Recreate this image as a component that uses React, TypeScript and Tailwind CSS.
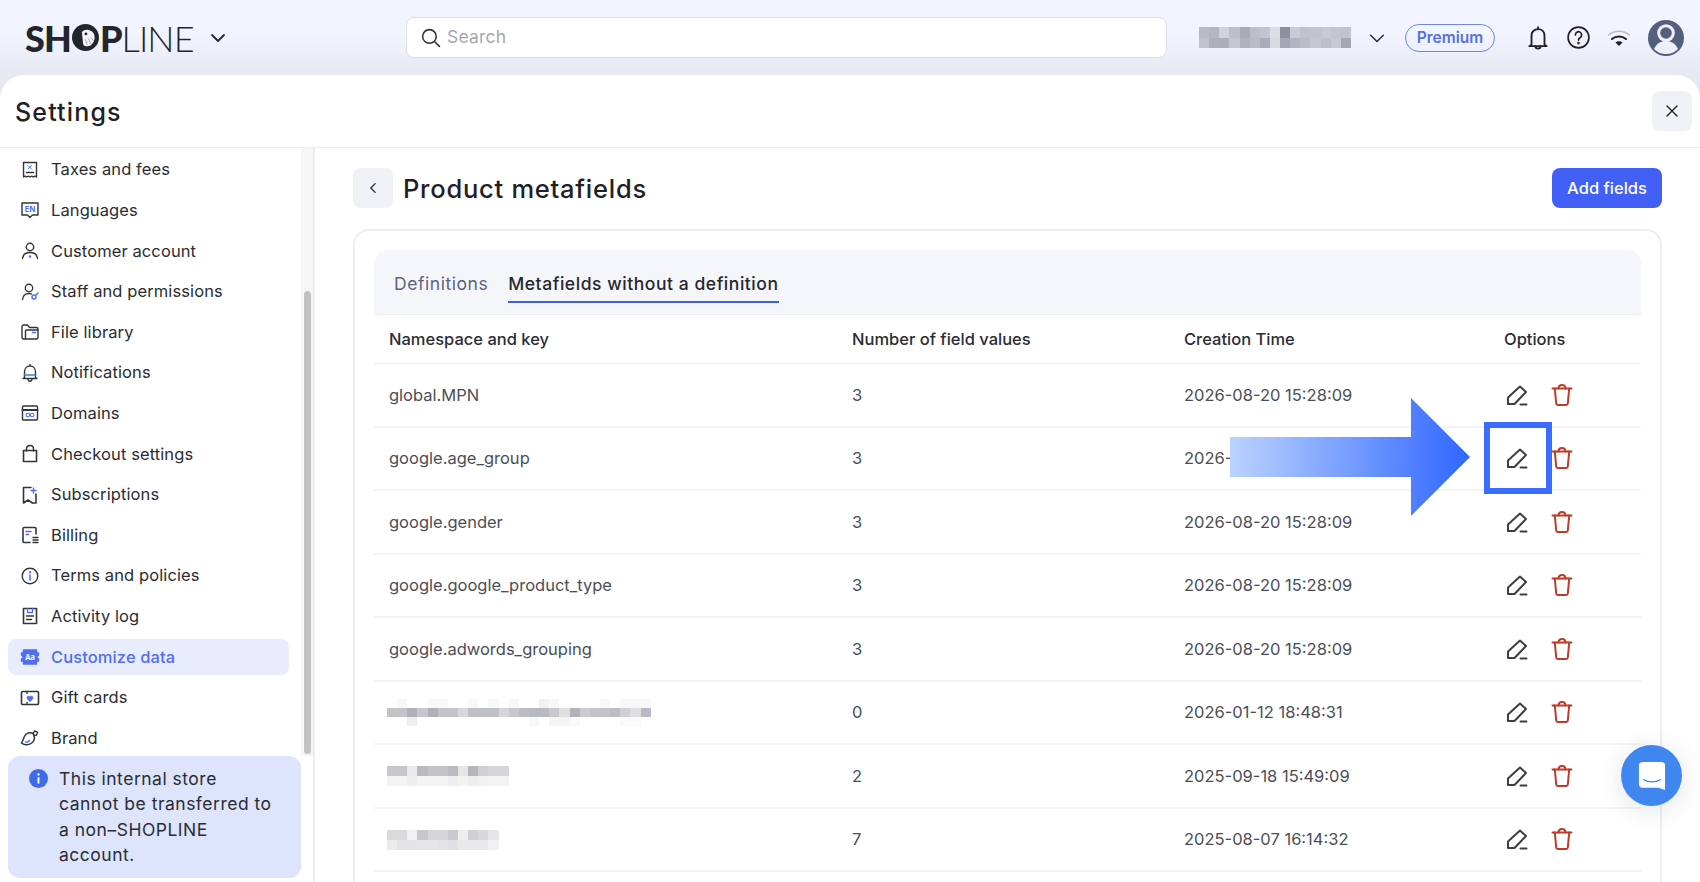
import React from "react";

const BLUE = "#4f6ef0";
const INK = "#33353c";

function Ic({ children, className = "w-5 h-5" }: { children: React.ReactNode; className?: string }) {
  return (
    <svg viewBox="0 0 20 20" fill="none" stroke={INK} strokeWidth={1.4} strokeLinecap="round" strokeLinejoin="round" className={`${className} shrink-0`}>
      {children}
    </svg>
  );
}

const icons: Record<string, React.ReactNode> = {
  tax: (<><path d="M3.5 2.5h13v14.5l-1.6-.9-1.6.9-1.6-.9-1.700.9-1.600-.9-1.600.9-1.600-.9-1.600.9z" /><path d="M8 5.500l3.500 3.500M11.500 5.500L8 9" stroke={BLUE} strokeWidth={1} /><path d="M6.500 12.500h7" /></>),
  lang: (<><path d="M2 3h16v12h-5.500L10 17.500 7.500 15H2z" /><text x="10" y="12" textAnchor="middle" fontSize="7.500" fontWeight="700" fill={BLUE} stroke="none" fontFamily="Inter">EN</text></>),
  user: (<><circle cx="10" cy="6" r="3.700" /><path d="M2.500 17.500c.5-4 3.500-6 7.500-6s7 2 7.500 6" /><circle cx="10" cy="15.500" r=".6" fill={BLUE} stroke={BLUE} /></>),
  staff: (<><circle cx="9" cy="6" r="3.700" /><path d="M2.500 17.500c.5-4 3-6 6.500-6 1 0 1.800.1 2.500.4" /><circle cx="14" cy="15" r="2" stroke={BLUE} /><path d="M16 13l2-2" stroke={BLUE} /></>),
  file: (<><path d="M2 15.500V4.500c0-.8.6-1.500 1.500-1.500h4l2 2.500h7c.8 0 1.500.7 1.500 1.500v8.500c0 .8-.7 1.500-1.500 1.500h-13c-.9 0-1.500-.7-1.500-1.500z" /><path d="M5.500 16.500V9c0-.6.4-1 1-1H18" /><path d="M12.500 10.500h3" stroke={BLUE} /></>),
  bell: (<><path d="M10 1.500v1.500M4.500 14.500V9c0-3.400 2.300-6 5.500-6s5.500 2.600 5.500 6v5.500l1.500 1H3z" /><path d="M4.500 12h11" stroke={BLUE} strokeWidth={1.600} /><path d="M8 16.500c.3 1.200 1 1.800 2 1.800s1.700-.6 2-1.800" /></>),
  domain: (<><rect x="2.500" y="3" width="15" height="14" rx="1" /><path d="M2.500 7h15" strokeWidth={2} /><circle cx="7.800" cy="12" r="1.800" stroke={BLUE} strokeWidth={1.100} /><circle cx="12.200" cy="12" r="1.800" stroke={BLUE} strokeWidth={1.100} /></>),
  bag: (<><path d="M3.500 6.500h13v11h-13z" strokeWidth={1.600} /><path d="M6.500 7V5c0-2 1.500-3.500 3.500-3.500S13.500 3 13.500 5v2" /></>),
  sub: (<><path d="M11 2.500H3.500v15.500l4.500-3 4.500 3 3.500 0V9" strokeWidth={1.600} /><path d="M13.500 3v5M11 5.500h5" stroke={BLUE} /></>),
  bill: (<><path d="M16 9V3.500c0-.6-.4-1-1-1H4c-.6 0-1 .4-1 1V16.500c0 .6.4 1 1 1h6" strokeWidth={1.600} /><path d="M6 6.500h5M6 9.500h2.500" stroke={BLUE} /><path d="M13 12.500h5M13 15h5M13 17.500h5" /></>),
  info: (<><circle cx="10" cy="10" r="7.800" /><path d="M10 9v5" stroke={BLUE} strokeWidth={1.500} /><circle cx="10" cy="6.300" r=".5" stroke={BLUE} /></>),
  log: (<><path d="M3.500 2.500h13v15h-13z" strokeWidth={1.600} /><path d="M7.500 2.500v4h5v-4" stroke={BLUE} /><path d="M6.500 10h7M6.500 13.500h5" /></>),
  custom: (<><path d="M3.500 3h13v3h2v2l-2 2 2 2v2h-2v3h-13v-3h-2v-2l2-2-2-2V6h2z" fill={BLUE} stroke={BLUE} /><text x="10" y="13" textAnchor="middle" fontSize="7.500" fontWeight="700" fill="#fff" stroke="none" fontFamily="Inter">Aa</text></>),
  gift: (<><rect x="1.500" y="3.500" width="17" height="13" rx="1" strokeWidth={1.600} /><path d="M7 3.500v2M7 14.500v2" /><path d="M10 13.500c-2-1.300-3-2.400-3-3.700 0-1 .8-1.700 1.600-1.700.6 0 1.100.3 1.400.8.300-.5.800-.8 1.400-.8.800 0 1.600.7 1.600 1.700 0 1.300-1 2.400-3 3.700z" fill={BLUE} stroke={BLUE} strokeWidth={.6} /></>),
  brand: (<><path d="M13 5.500c-3-1.800-7-.5-8.500 2.800C3.500 10.500 3 12.500 1.500 15c2 2 6.500 2.500 9.500.5 3-2 4-5 3-8z" strokeWidth={1.500} /><path d="M13.200 5.300l1.500-2.500 3 1.500-1.300 3-2.400.2z" /><path d="M5.500 14c1.500.3 3-.2 4-1.500" stroke={BLUE} /></>),
};

const nav: [string, string][] = [
  ["tax", "Taxes and fees"],
  ["lang", "Languages"],
  ["user", "Customer account"],
  ["staff", "Staff and permissions"],
  ["file", "File library"],
  ["bell", "Notifications"],
  ["domain", "Domains"],
  ["bag", "Checkout settings"],
  ["sub", "Subscriptions"],
  ["bill", "Billing"],
  ["info", "Terms and policies"],
  ["log", "Activity log"],
  ["custom", "Customize data"],
  ["gift", "Gift cards"],
  ["brand", "Brand"],
];

function Edit() {
  return (
    <svg viewBox="0 0 24 24" fill="none" stroke="#3d3f47" strokeWidth={2} strokeLinecap="round" strokeLinejoin="round" className="w-[24px] h-[24px]">
      <path d="M3 21v-6.500L15 3.500 21 9 9.500 21z" />
      <path d="M15.500 21.500H21.500" />
    </svg>
  );
}

function Trash() {
  return (
    <svg viewBox="0 0 24 24" fill="none" stroke="#bd3b28" strokeWidth={2} strokeLinecap="round" strokeLinejoin="round" className="w-[24px] h-[24px]">
      <path d="M2.500 5.500h19" />
      <path d="M8.500 5.500c0-2 1.400-3.500 3.500-3.500s3.500 1.500 3.500 3.500" />
      <path d="M4.800 5.500l1.400 15c.1.900.7 1.500 1.600 1.500h8.400c.9 0 1.500-.6 1.600-1.500l1.400-15" />
    </svg>
  );
}

function Blocks({ rows, w, h }: { rows: string[][]; w: number; h: number }) {
  return (
    <div className="flex flex-col blur-[0.6px]">
      {rows.map((r, i) => (
        <div key={i} className="flex">
          {r.map((c, j) => (
            <div key={j} style={{ width: w, height: h, background: c }} />
          ))}
        </div>
      ))}
    </div>
  );
}

const nameRows = [
  ["#b9bbc8","#b4b6c3","#d0d2de","#bcbeca","#a9abb8","#bdbfcb","#c2c4d0","#dcdde6","#8e909e","#c9cbd6","#bfc1cd","#c1c3cf","#c7c9d4","#c2c4d0","#c0c2ce"],
  ["#c0c2ce","#adafbc","#acaeba","#c5c7d2","#b0b2bf","#b9bbc7","#a9abb8","#d8dae3","#a5a7b5","#b2b4c1","#bbbdc9","#c4c6d1","#bcbeca","#c6c8d3","#a4a6b3"],
];
const r6 = [
  ["#fff","#f8f8f9","#fff","#fff","#f8f8f9","#f8f8f9","#fff","#fff","#f8f8f9","#fff","#f8f8f9","#fff","#f8f8f9","#fff","#fff","#f1f1f3","#f8f8f9","#fff","#fff","#fff","#fff","#f8f8f9","#fff","#f8f8f9","#f8f8f9","#f8f8f9"],
  ["#c3c3c9","#c3c3c9","#b0b0b8","#c6c6cc","#b0b0b8","#c3c3c9","#c3c3c9","#d8d8dc","#c0c0c7","#c0c0c7","#c0c0c7","#d6d6da","#c6c6cc","#bcbcc3","#b9b9c1","#b9b9c1","#c8c8ce","#e0e0e3","#b2b2ba","#cbcbd0","#c3c3c9","#c3c3c9","#bcbcc3","#cfcfd4","#dedee1","#b9b9c1"],
  ["#fff","#fff","#eeeeef","#fff","#fff","#fff","#fff","#fff","#fff","#fff","#fff","#fff","#fff","#fff","#f8f8f9","#fff","#f5f5f6","#f5f5f6","#fafafb","#fff","#fff","#fff","#fff","#fafafb","#fafafb","#fff"],
];
const r7 = [
  ["#c6c6cc","#c6c6cc","#ebebed","#b9b9c1","#c3c3c9","#c3c3c9","#b9b9c1","#e6e6e9","#b5b5bd","#cfcfd4","#d6d6da","#d6d6da"],
  ["#f3f3f4","#f3f3f4","#eeeeef","#f3f3f4","#f3f3f4","#f3f3f4","#eeeeef","#f3f3f4","#eeeeef","#f1f1f3","#f3f3f4","#f3f3f4"],
];
const r8 = [
  ["#dadade","#dadade","#f0f0f1","#c6c6cc","#d6d6da","#d6d6da","#c9c9cf","#eeeeef","#cfcfd4","#d8d8dc","#e6e6e9"],
  ["#ebebed","#e4e4e7","#e4e4e7","#e6e6e9","#e6e6e9","#e4e4e7","#e0e0e3","#e8e8ea","#e8e8ea","#e8e8ea","#f0f0f1"],
];

type Row = { key: React.ReactNode; n: string; t: string };
const rows: Row[] = [
  { key: "global.MPN", n: "3", t: "2026-08-20 15:28:09" },
  { key: "google.age_group", n: "3", t: "2026-08-20 15:28:09" },
  { key: "google.gender", n: "3", t: "2026-08-20 15:28:09" },
  { key: "google.google_product_type", n: "3", t: "2026-08-20 15:28:09" },
  { key: "google.adwords_grouping", n: "3", t: "2026-08-20 15:28:09" },
  { key: <div className="-ml-[2px]"><Blocks rows={r6} w={10.150} h={9} /></div>, n: "0", t: "2026-01-12 18:48:31" },
  { key: <div className="-ml-[2px]"><Blocks rows={r7} w={10.150} h={10} /></div>, n: "2", t: "2025-09-18 15:49:09" },
  { key: <div className="-ml-[2px]"><Blocks rows={r8} w={10.150} h={10} /></div>, n: "7", t: "2025-08-07 16:14:32" },
];

export default function App() {
  return (
    <div className="relative w-[1700px] h-[882px] overflow-hidden flex flex-col bg-[#e6e8f2] font-['Inter',sans-serif] text-[#26282e]">
      {/* top bar */}
      <header className="h-[75px] shrink-0 flex items-center bg-gradient-to-b from-[#f2f5ff] from-45% to-[#e6e8f2]">
        <div className="w-[406px] shrink-0 pl-[25px] flex items-center">
          <div className="flex items-center h-[40px] text-[#23262d] text-[36px] leading-[40px] tracking-[-0.9px] font-['Lato',sans-serif]">
            <span className="font-black">SH</span>
            <svg viewBox="0 0 30 30" className="w-[27px] h-[27px] mx-[1px]">
              <circle cx="15" cy="15" r="15" fill="#23262d" />
              <path d="M11 9c3-4 10-3.500 13 1.500 2.500 5 .5 10-3 13-3 2-6.500 1.500-8.500-.5z" fill="#f4f5fa" />
              <circle cx="15.500" cy="11" r="1.600" fill="#23262d" />
              <path d="M15 17l2 6M18 16l3 6M21 15l3 4" stroke="#8e919c" strokeWidth="0.9" fill="none" />
            </svg>
            <span className="font-black">P</span>
            <span className="font-light">LINE</span>
          </div>
          <svg viewBox="0 0 20 20" fill="none" stroke="#26282e" strokeWidth={1.800} strokeLinecap="round" strokeLinejoin="round" className="w-[20px] h-[20px] ml-[14px]">
            <path d="M4 7l6 6 6-6" />
          </svg>
        </div>
        <div className="w-[761px] h-[41px] shrink-0 rounded-[8px] border border-[#dcdfe8] bg-white flex items-center pl-[13px] gap-[6px]">
          <svg viewBox="0 0 20 20" fill="none" stroke="#33353c" strokeWidth={1.500} strokeLinecap="round" className="w-[21px] h-[21px]">
            <circle cx="9" cy="9" r="6.500" />
            <path d="M14 14l4.500 4.500" />
          </svg>
          <span className="text-[17.500px] tracking-[0.2px] text-[#a5a8b2]">Search</span>
        </div>
        <div className="ml-[32px] w-[152px] shrink-0">
          <Blocks rows={nameRows} w={10.130} h={10.500} />
        </div>
        <svg viewBox="0 0 20 20" fill="none" stroke="#26282e" strokeWidth={1.600} strokeLinecap="round" strokeLinejoin="round" className="w-[18px] h-[18px] ml-[17px]">
          <path d="M3 7l7 7 7-7" />
        </svg>
        <div className="ml-[19px] w-[90px] h-[28px] rounded-full border border-[#6f87d9] flex items-center justify-center text-[15.500px] font-semibold text-[#5571df]">
          Premium
        </div>
        <svg viewBox="0 0 24 24" fill="none" stroke="#1f2126" strokeWidth={1.700} strokeLinecap="round" strokeLinejoin="round" className="w-[26px] h-[26px] ml-[30px]">
          <path d="M12 2v1.800M6 18V10c0-3.600 2.500-6.200 6-6.200s6 2.600 6 6.200v8l2 1.500H4z" />
          <path d="M9.500 19.500c.2 1.500 1.200 2.300 2.500 2.300s2.300-.8 2.500-2.300" />
        </svg>
        <svg viewBox="0 0 24 24" fill="none" stroke="#1f2126" strokeWidth={1.600} strokeLinecap="round" strokeLinejoin="round" className="w-[25px] h-[25px] ml-[15px]">
          <circle cx="12" cy="12" r="10" />
          <path d="M9 9.500a3 3 0 1 1 4.600 2.500c-1 .7-1.600 1.200-1.600 2.500" />
          <circle cx="12" cy="17.300" r=".5" />
        </svg>
        <svg viewBox="0 0 24 24" fill="none" strokeLinecap="round" className="w-[24px] h-[24px] ml-[16px]">
          <path d="M1.500 9C7.500 4 16.500 4 22.500 9" stroke="#b9bcc6" strokeWidth={1.600} />
          <path d="M5 13c4-3.300 10-3.300 14 0" stroke="#1f2126" strokeWidth={2} />
          <path d="M8.500 16.500c2-1.700 5-1.700 7 0L12 20z" fill="#1f2126" />
        </svg>
        <svg viewBox="0 0 36 36" className="w-[36px] h-[36px] ml-[17px]">
          <circle cx="18" cy="18" r="18" fill="#555f7c" />
          <circle cx="18" cy="13" r="8.800" fill="#eef0f9" />
          <circle cx="18" cy="13" r="5.800" fill="#555f7c" />
          <path d="M6 29c3-6 7-8 12-8s9 2 12 8c-3 3-7 5-12 5s-9-2-12-5z" fill="#eef0f9" />
        </svg>
      </header>

      {/* panel */}
      <div className="flex-1 min-h-0 bg-white rounded-t-[24px] flex flex-col">
        <div className="h-[73px] shrink-0 border-b border-[#eceef1] flex items-center justify-between pl-[15px] pr-[8px]">
          <h1 className="pt-[3px] text-[25px] font-medium tracking-[1.150px] text-[#1f2126]">Settings</h1>
          <button className="w-[40px] h-[40px] rounded-[8px] bg-[#f0f1f6] flex items-center justify-center">
            <svg viewBox="0 0 16 16" fill="none" stroke="#1f2126" strokeWidth={1.400} strokeLinecap="round" className="w-[16px] h-[16px]">
              <path d="M3 3l10 10M13 3L3 13" />
            </svg>
          </button>
        </div>

        <div className="flex-1 min-h-0 flex">
          {/* sidebar */}
          <aside className="w-[315px] shrink-0 border-r-2 border-[#ebedf0] flex flex-col">
            <div className="h-[608px] shrink-0 flex overflow-hidden">
              <nav className="w-[301px] shrink-0 pt-[1.500px] pl-[8px]">
                {nav.map(([ic, label]) => {
                  const active = label === "Customize data";
                  return (
                    <div key={label} className="h-[40.600px] py-[2.500px]">
                      <div className={`h-full w-[281px] rounded-[8px] flex items-center pl-[12px] gap-[11px] text-[16.500px] tracking-[0.1px] ${active ? "bg-[#e9ecfd] text-[#4f6ef0] font-medium" : "text-[#2b2d33]"}`}>
                        <Ic>{icons[ic]}</Ic>
                        <span>{label}</span>
                      </div>
                    </div>
                  );
                })}
              </nav>
              <div className="w-[12px] bg-[#f6f6f7] pt-[143px] pl-[3px]">
                <div className="w-[7px] h-[463px] rounded-full bg-[#c2c2c4]" />
              </div>
            </div>
            <div className="ml-[8px] w-[293px] h-[122px] rounded-[12px] bg-[#dde4fb] pt-[10px] pl-[21px] flex gap-[11px] text-[17.500px] leading-[25.400px] tracking-[0.5px] text-[#2a2d36]">
              <svg viewBox="0 0 20 20" className="w-[19px] h-[19px] mt-[3px] shrink-0">
                <circle cx="10" cy="10" r="10" fill="#3f6ae8" />
                <rect x="9" y="8.500" width="2" height="7" rx="1" fill="#fff" />
                <circle cx="10" cy="5.800" r="1.200" fill="#fff" />
              </svg>
              <p className="whitespace-nowrap">This internal store<br />cannot be transferred to<br />a non–SHOPLINE<br />account.</p>
            </div>
          </aside>

          {/* main */}
          <main className="flex-1 min-w-0 pt-[20px] pl-[38px] pr-[38px] overflow-hidden">
            <div className="h-[40px] flex items-center">
              <button className="w-[40px] h-[40px] rounded-[8px] bg-[#f0f1f6] flex items-center justify-center">
                <svg viewBox="0 0 16 16" fill="none" stroke="#26282e" strokeWidth={1.500} strokeLinecap="round" strokeLinejoin="round" className="w-[14px] h-[14px]">
                  <path d="M10.500 3L5.500 8l5 5" />
                </svg>
              </button>
              <h2 className="ml-[10px] pt-[2px] text-[25.500px] font-medium tracking-[0.75px] text-[#1f2126]">Product metafields</h2>
              <button className="ml-auto w-[110px] h-[40px] rounded-[8px] bg-[#4260f6] text-white text-[16.500px] font-medium">Add fields</button>
            </div>

            <div className="mt-[21px] h-[700px] rounded-[16px] border-2 border-[#eceef1] pt-[19px] px-[19px]">
              <div className="h-[65px] rounded-t-[14px] bg-[#f5f6fa] border-b border-[#eceef1] flex items-end pl-[20px] gap-[20px] text-[17.500px] tracking-[0.55px]">
                <div className="mb-[11px] h-[41px] pt-[9px] leading-[26px] text-[#5b6380]">Definitions</div>
                <div className="mb-[11px] h-[41px] pt-[9px] leading-[26px] font-medium text-[#26282e] border-b-[2.500px] border-[#3f5fe0]">Metafields without a definition</div>
              </div>
              <div className="h-[49px] pt-[1px] flex items-center border-b border-[#eef0f2] text-[16.500px] font-medium text-[#2b2d33]">
                <div className="w-[478px] pl-[15px]">Namespace and key</div>
                <div className="w-[332px]">Number of field values</div>
                <div className="w-[320px]">Creation Time</div>
                <div>Options</div>
              </div>
              {rows.map((r, i) => (
                <div key={i} className="h-[63.500px] flex items-center border-b-2 border-[#f3f4f6] text-[16.500px] text-[#4b4e56]">
                  <div className="w-[478px] pl-[15px] pt-[1px]">{r.key}</div>
                  <div className="w-[332px] pt-[1px]">{r.n}</div>
                  <div className="w-[320px] pt-[1px]">{r.t}</div>
                  <div className="flex gap-[21px] pl-[1px]">
                    <Edit />
                    <Trash />
                  </div>
                </div>
              ))}
            </div>
          </main>
        </div>
      </div>

      {/* annotation arrow */}
      <svg viewBox="0 0 240 118" className="absolute left-[1230px] top-[398px] w-[240px] h-[118px]">
        <defs>
          <linearGradient id="arrowFill" x1="0" x2="1" y1="0" y2="0">
            <stop offset="0" stopColor="#bcd3fe" />
            <stop offset="1" stopColor="#2f66ff" />
          </linearGradient>
        </defs>
        <path d="M0 39h181V0l59 59-59 59V79H0z" fill="url(#arrowFill)" />
      </svg>
      {/* annotation box */}
      <div className="absolute left-[1484px] top-[422px] w-[68px] h-[72px] border-[6px] border-[#3a6cff]" />

      {/* chat launcher */}
      <div className="absolute left-[1621px] top-[745px] w-[61px] h-[61px] rounded-full bg-[#3f86ee] flex items-center justify-center shadow-[0_4px_24px_rgba(40,50,80,0.14)]">
        <svg viewBox="0 0 30 32" className="w-[28px] h-[30px]">
          <path d="M5 1h20a4 4 0 0 1 4 4v26l-7-2.500H5a4 4 0 0 1-4-4V5a4 4 0 0 1 4-4z" fill="#fff" />
          <path d="M6 20c5 3 13 3 18 0" fill="none" stroke="#3f86ee" strokeWidth={1.500} strokeLinecap="round" />
        </svg>
      </div>
    </div>
  );
}
